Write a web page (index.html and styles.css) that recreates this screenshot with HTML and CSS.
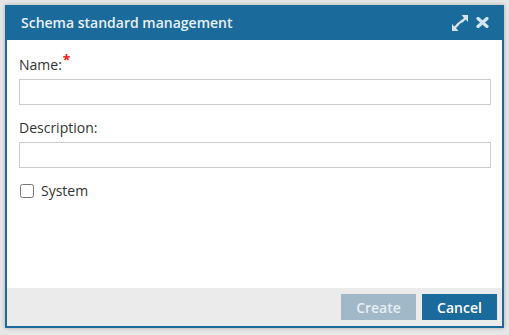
FILE: index.html
```html
<!DOCTYPE html>
<html lang="en">
<head>
    <meta charset="UTF-8">
    <title>Schema standard management</title>
    <link rel="stylesheet" href="styles.css">
</head>
<body>
    <div class="dialog">
        <div class="dialog-title">
            <span class="title-text">Schema standard management</span>
            <div class="title-icons">
                <svg width="18" height="16" viewBox="0 0 18 16" class="icon">
                    <path d="M17 0v7l-2.4-2.4-3.2 3.2-1.6-1.6 3.2-3.2L10.6 0z" fill="#d6e5f0"/>
                    <path d="M1 16V9l2.4 2.4 3.2-3.2 1.6 1.6-3.2 3.2L7.4 16z" fill="#d6e5f0"/>
                    <path d="M6 10l6-5" stroke="#d6e5f0" stroke-width="2.2"/>
                </svg>
                <svg width="13" height="11" viewBox="0 0 13 11" class="icon">
                    <path d="M2 1.5l9 8M11 1.5l-9 8" stroke="#d6e5f0" stroke-width="3.2" stroke-linecap="round"/>
                </svg>
            </div>
        </div>
        <div class="dialog-body">
            <label class="field-label">Name:<span class="required">*</span></label>
            <input type="text" class="field-input">

            <label class="field-label">Description:</label>
            <input type="text" class="field-input">

            <label class="check-row">
                <input type="checkbox" class="check">
                <span>System</span>
            </label>
        </div>
        <div class="dialog-footer">
            <button class="btn btn-disabled">Create</button>
            <button class="btn">Cancel</button>
        </div>
    </div>
</body>
</html>
```

FILE: styles.css
```css
body {
    margin: 0;
    padding: 5px;
    background: #e6e6e6;
    font-family: "Open Sans", Arial, sans-serif;
    font-size: 14px;
    color: #333;
}
.dialog {
    width: 495px;
    height: 321px;
    border: 2px solid #1b6a9c;
    border-top: none;
    background: #fff;
    display: flex;
    flex-direction: column;
    box-shadow: 0 0 4px rgba(0, 0, 0, 0.25);
}
.dialog-title {
    height: 35px;
    background: #1b6a9c;
    color: #e8f0f6;
    display: flex;
    align-items: center;
    justify-content: space-between;
    padding: 0 15px 0 16px;
    margin: 0 -2px;
}
.title-text {
    font-weight: 600;
    font-size: 14px;
}
.title-icons {
    display: flex;
    align-items: center;
    gap: 7px;
}
.icon {
    display: block;
}
.dialog-body {
    flex: 1;
    padding: 15px 11px 0 12px;
}
.field-label {
    display: block;
    line-height: 20px;
    margin-bottom: 4px;
}
.required {
    color: #f01818;
    position: relative;
    top: -5px;
    margin-left: 1px;
    font-size: 14px;
    font-weight: bold;
    line-height: 0;
}
.field-input {
    display: block;
    box-sizing: border-box;
    width: 100%;
    height: 26px;
    border: 1px solid #ccc;
    margin: 0 0 13px;
    padding: 2px 6px;
    font-family: inherit;
}
.check-row {
    display: flex;
    align-items: center;
    gap: 7px;
    line-height: 20px;
}
.check {
    width: 14px;
    height: 14px;
    margin: 0 0 0 1px;
}
.dialog-footer {
    height: 38px;
    background: #ebebeb;
    display: flex;
    justify-content: flex-end;
    align-items: center;
    gap: 6px;
    padding: 0 5px;
}
.btn {
    width: 75px;
    height: 26px;
    border: none;
    background: #1b6a9c;
    color: #fff;
    font-family: inherit;
    font-size: 14px;
    font-weight: 600;
    cursor: pointer;
}
.btn-disabled {
    background: #a0b8c8;
    color: #e8eef2;
}
```
